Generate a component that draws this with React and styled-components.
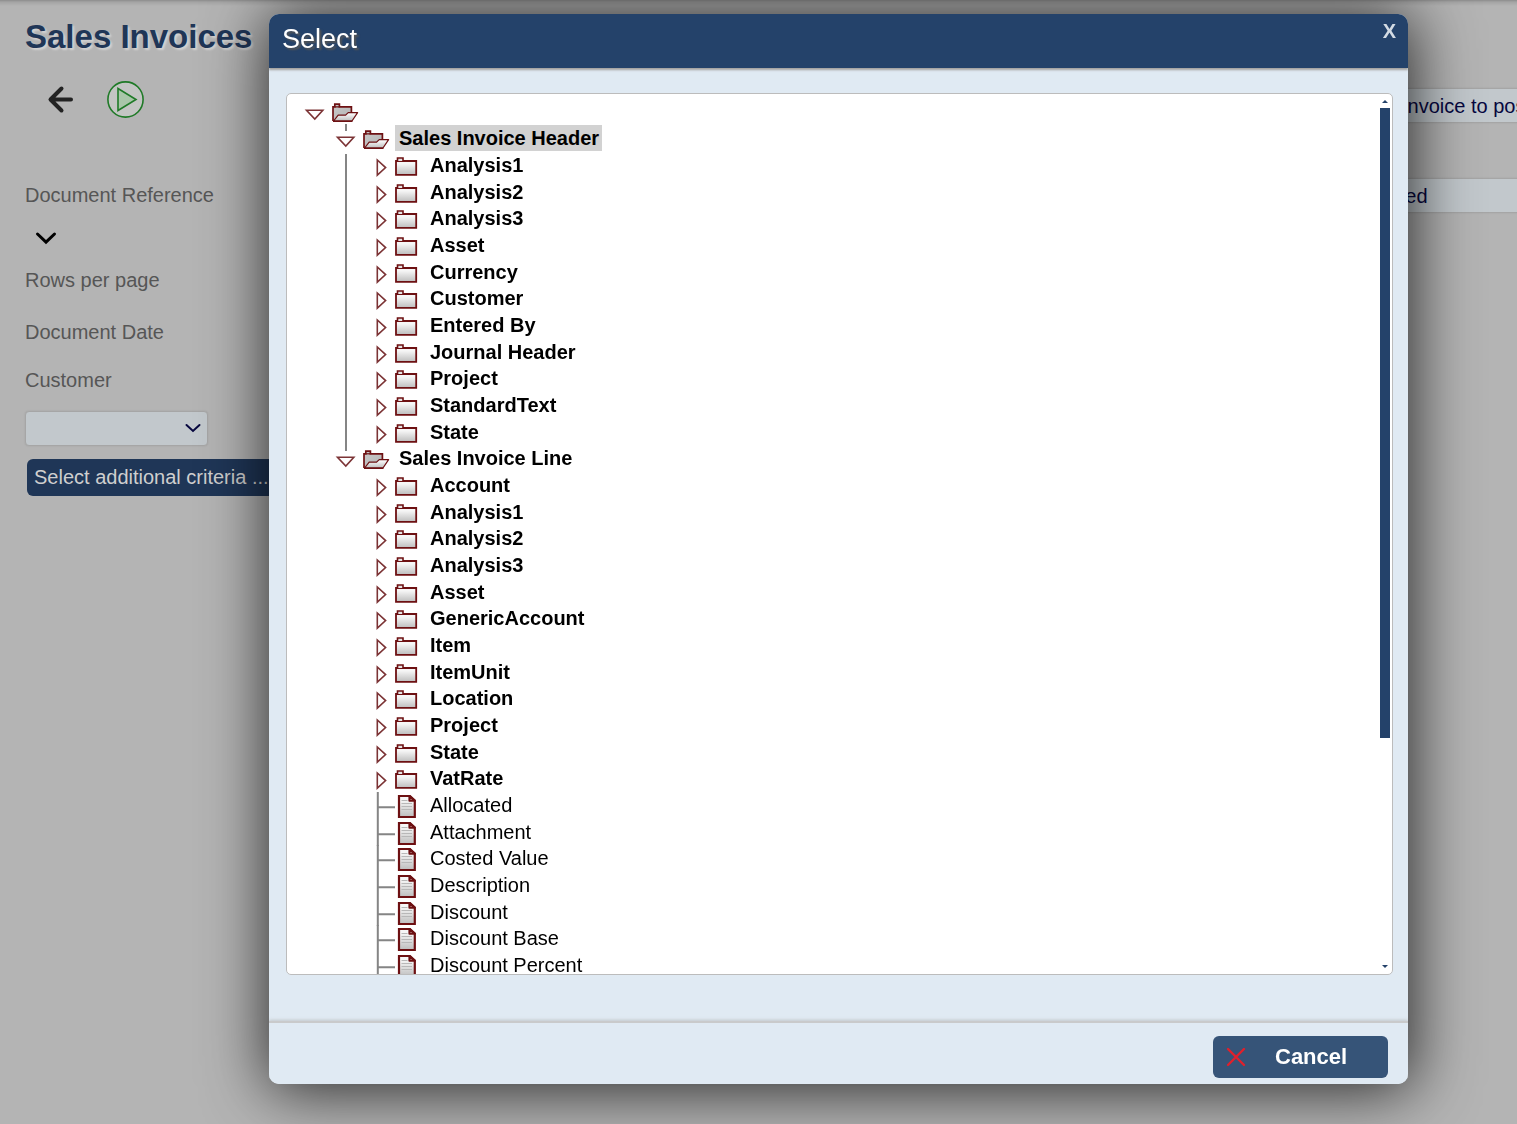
import React from "react";
import styled, { createGlobalStyle, css } from "styled-components";

const GlobalStyle = createGlobalStyle`
  *, *::before, *::after { box-sizing: border-box; }
  html, body { margin: 0; padding: 0; background: #b4b4b4; }
  body, button, input, select {
    font-family: "Liberation Sans", Arial, Helvetica, sans-serif;
    font-size: 20px;
  }
  body { overflow: hidden; }
  button { cursor: pointer; }
`;

const navy = "#24426a";
const maroon = "#6d1012";

const Page = styled.main`
  display: flex;
  justify-content: space-between;
  min-height: 100vh;
  overflow: hidden;
  background: linear-gradient(#8c8c8c, #a4a4a4 2px, #b4b4b4 6px);
`;

const Criteria = styled.form`
  display: flex;
  flex-direction: column;
  align-items: flex-start;
  width: 300px;
  padding: 17px 0 0 25px;
`;

const Title = styled.h1`
  margin: 0 0 24px;
  font-size: 33px;
  line-height: 40px;
  font-weight: bold;
  white-space: nowrap;
  color: #1f3657;
  text-shadow: 2px 2px 2px #d2d2d2;
`;

const Toolbar = styled.div`
  display: flex;
  gap: 28px;
  padding-left: 17px;
  margin-bottom: 65px;
`;

const IconButton = styled.button`
  display: flex;
  padding: 0;
  border: 0;
  background: none;
`;

const FieldLabel = styled.label`
  line-height: 24px;
  color: #565656;
  margin-bottom: ${(p) => p.$gap}px;
`;

const ExpandButton = styled(IconButton)`
  margin: 0 0 18px 9px;
`;

const SelectWrap = styled.div`
  position: relative;
  width: 183px;
  margin-bottom: 13px;
`;

const fieldLook = css`
  height: 35px;
  border: 1px solid #a6a6a6;
  background: #c2c8cc;
  color: #07073f;
  box-shadow: 0 0 2px rgba(0, 0, 0, 0.1);
`;

const SelectBox = styled.select`
  ${fieldLook}
  display: block;
  width: 100%;
  border-radius: 4px;
  appearance: none;
`;

const SelectArrow = styled.svg`
  position: absolute;
  right: 7px;
  top: 11px;
  pointer-events: none;
`;

const CriteriaButton = styled.button`
  height: 37px;
  margin-left: 2px;
  padding: 0 7px;
  border: 0;
  border-radius: 6px;
  background: #1f3657;
  color: #cfcfcf;
  white-space: nowrap;
`;

const Status = styled.div`
  display: flex;
  flex-direction: column;
  gap: 55px;
  width: 187px;
  padding-top: 88px;
`;

const StatusInput = styled.input`
  ${fieldLook}
  flex-shrink: 0;
  width: 260px;
  padding: 1px 11px 0;
  border-radius: 4px;
`;

const Overlay = styled.div`
  position: fixed;
  inset: 0;
  display: flex;
  padding: 14px 109px 40px 269px;
`;

const Dialog = styled.section`
  flex: 1;
  min-width: 0;
  display: flex;
  flex-direction: column;
  border-radius: 10px;
  overflow: hidden;
  background: #e0eaf3;
  box-shadow: 2px 3px 64px 2px rgba(0, 0, 0, 0.8);
`;

const DialogHeader = styled.header`
  display: flex;
  justify-content: space-between;
  align-items: flex-start;
  height: 54px;
  flex-shrink: 0;
  padding: 5px 12px 0 13px;
  background: ${navy};
  box-shadow: 0 2px 2px rgba(120, 110, 100, 0.6);
`;

const DialogTitle = styled.h2`
  margin: 0;
  font-size: 27px;
  line-height: 40px;
  font-weight: normal;
  color: #fff;
  text-shadow: 2px 2px 2px #555;
`;

const CloseButton = styled.button`
  padding: 0;
  border: 0;
  background: none;
  font-size: 20px;
  line-height: 24px;
  font-weight: bold;
  color: #d3dbe4;
`;

const DialogBody = styled.div`
  flex: 1;
  min-height: 0;
  display: flex;
  padding: 25px 15px 48px 17px;
`;

const TreePanel = styled.div`
  flex: 1;
  display: flex;
  min-width: 0;
  overflow: hidden;
  border: 1px solid #bcbcbc;
  border-radius: 5px;
  background: #fff;
`;

const TreeView = styled.div`
  flex: 1;
  overflow: hidden;
  padding: 4px 0 0 17px;
`;

const ScrollTrack = styled.div`
  display: flex;
  flex-direction: column;
  align-items: center;
  justify-content: space-between;
  width: 10px;
  margin-right: 2px;
`;

const ScrollArea = styled.div`
  flex: 1;
  width: 100%;
`;

const ScrollThumb = styled.div`
  height: 74%;
  background: ${navy};
`;

const Branch = styled.ul`
  margin: 0;
  padding: 0 0 0 31px;
  list-style: none;
  ${(p) =>
    p.$line &&
    css`
      background: linear-gradient(#858585, #858585) no-repeat 10px 2px / 2px 100%;
    `}
`;

const Row = styled.div`
  display: flex;
  height: 27px;
`;

const Leaf = styled.li`
  display: flex;
  height: 27px;
  &:nth-child(3n + 2) {
    height: 26px;
  }
`;

const Toggle = styled.svg`
  flex: none;
  width: 28px;
  height: 27px;
  overflow: visible;
`;

const Icon = styled.svg`
  flex: none;
  width: 32px;
  height: 27px;
  overflow: visible;
`;

const Label = styled.span`
  height: 26px;
  padding: 3px 3px 0 4px;
  line-height: 20px;
  white-space: nowrap;
  color: #000;
  font-weight: ${(p) => (p.$bold ? "bold" : "normal")};
  background: ${(p) => (p.$selected ? "#d2d2d2" : "transparent")};
`;

const DialogFooter = styled.footer`
  display: flex;
  justify-content: flex-end;
  flex-shrink: 0;
  padding: 13px 20px 6px;
  background: #e0eaf3;
  box-shadow: 0 -2px 0 #c9cacb, 0 -3px 3px rgba(150, 145, 140, 0.4);
`;

const CancelButton = styled.button`
  display: flex;
  align-items: center;
  gap: 29px;
  width: 175px;
  height: 42px;
  padding: 0 13px;
  border: 0;
  border-radius: 6px;
  background: #365478;
  color: #fff;
  font-size: 22px;
  font-weight: bold;
`;

const HiddenDefs = styled.svg`
  position: absolute;
`;

function Defs() {
  return (
    <HiddenDefs width="0" height="0" aria-hidden="true">
      <defs>
        <linearGradient id="paper" x1="0" y1="0" x2="0" y2="1">
          <stop offset="0.2" stopColor="#f6f6f6" />
          <stop offset="1" stopColor="#bdbdbd" />
        </linearGradient>
        <linearGradient id="back" x1="0" y1="0" x2="1" y2="1">
          <stop offset="0" stopColor="#c8c8c8" />
          <stop offset="1" stopColor="#b4b4b4" />
        </linearGradient>
      </defs>
    </HiddenDefs>
  );
}

function OpenToggle({ line }) {
  return (
    <Toggle viewBox="0 0 28 27" aria-hidden="true">
      {line && <path d="M11 -1V6" stroke="#858585" strokeWidth="2" />}
      <path d="M2.5 12.3H18.8L10.8 21Z" fill="#fff" stroke="#7c3436" strokeWidth="1.6" />
    </Toggle>
  );
}

function ClosedToggle() {
  return (
    <Toggle viewBox="0 0 28 27" aria-hidden="true">
      <path d="M11.3 8V23.2L19.6 15.6Z" fill="#fff" stroke="#7c3436" strokeWidth="1.6" />
    </Toggle>
  );
}

function LeafLine() {
  return (
    <Toggle viewBox="0 0 28 27" aria-hidden="true">
      <path d="M11.8 0V27M12 15.2H29" fill="none" stroke="#858585" strokeWidth="2" />
    </Toggle>
  );
}

function OpenFolder() {
  return (
    <Icon viewBox="0 0 32 27" aria-hidden="true">
      <path d="M1 23V8.8H2.8V6.2H7.4V8.8H19.4V14.5" fill="url(#back)" stroke={maroon} strokeWidth="1.7" />
      <path d="M2.8 8.8H7.4" stroke={maroon} strokeWidth="1.2" />
      <path
        d="M1.6 23L6.2 17.2H13.6L16.2 14.6H25.6L20 23Z"
        fill="url(#paper)"
        stroke={maroon}
        strokeWidth="1.2"
        strokeLinejoin="round"
      />
      <path d="M1 23.2H20.4" stroke={maroon} strokeWidth="1.6" />
    </Icon>
  );
}

function ClosedFolder() {
  return (
    <Icon viewBox="0 0 32 27" aria-hidden="true">
      <path d="M2 9H22.2V22.8H2Z" fill="url(#paper)" stroke={maroon} strokeWidth="1.8" />
      <path d="M3.5 9V6H9V9" fill="#e4e4e4" stroke={maroon} strokeWidth="1.6" />
    </Icon>
  );
}

function FileIcon() {
  return (
    <Icon viewBox="0 0 32 27" aria-hidden="true">
      <path d="M5 4H16L20.8 8.4V25H5Z" fill="url(#paper)" stroke={maroon} strokeWidth="2.2" />
      <path d="M7.5 8.5H13.5M7.5 11.5H18M7.5 14.5H18M7.5 17.5H18" stroke="#b8b8b8" />
      <path
        d="M15.4 4V8.8H20.8Z"
        fill="#c9a3a3"
        stroke={maroon}
        strokeWidth="2"
        strokeLinejoin="round"
      />
    </Icon>
  );
}

const headerFolders = [
  "Analysis1", "Analysis2", "Analysis3", "Asset", "Currency", "Customer",
  "Entered By", "Journal Header", "Project", "StandardText", "State",
];

const lineFolders = [
  "Account", "Analysis1", "Analysis2", "Analysis3", "Asset", "GenericAccount",
  "Item", "ItemUnit", "Location", "Project", "State", "VatRate",
];

const lineFields = [
  "Allocated", "Attachment", "Costed Value", "Description", "Discount",
  "Discount Base", "Discount Percent",
];

function Group({ name, selected, line, folders, fields = [] }) {
  return (
    <li>
      <Row>
        <OpenToggle line />
        <OpenFolder />
        <Label $bold $selected={selected}>{name}</Label>
      </Row>
      <Branch $line={line}>
        {folders.map((f) => (
          <Leaf key={f}>
            <ClosedToggle />
            <ClosedFolder />
            <Label $bold>{f}</Label>
          </Leaf>
        ))}
        {fields.map((f) => (
          <Leaf key={f}>
            <LeafLine />
            <FileIcon />
            <Label>{f}</Label>
          </Leaf>
        ))}
      </Branch>
    </li>
  );
}

export default function App() {
  return (
    <>
      <GlobalStyle />
      <Defs />
      <Page>
        <Criteria onSubmit={(e) => e.preventDefault()}>
          <Title>Sales Invoices</Title>
          <Toolbar>
            <IconButton type="button" aria-label="Back">
              <svg width="37" height="37" viewBox="0 0 37 37" fill="none" stroke="#222" strokeWidth="4">
                <path d="M19.5 7.5L8.5 18.5L19.5 29.5M9 18.5H29" strokeLinejoin="round" strokeLinecap="round" />
              </svg>
            </IconButton>
            <IconButton type="button" aria-label="Run">
              <svg width="37" height="37" viewBox="0 0 37 37" stroke="#1f7a27" strokeWidth="1.6">
                <circle cx="18.5" cy="18.5" r="17.6" fill="#c3c5c3" />
                <path d="M11 7.5V29.5L29 18.5Z" fill="#a9c6a9" />
              </svg>
            </IconButton>
          </Toolbar>
          <FieldLabel as="span" $gap={19}>Document Reference</FieldLabel>
          <ExpandButton type="button" aria-label="Expand">
            <svg width="24" height="24" viewBox="0 0 24 24" fill="none" stroke="#000" strokeWidth="3">
              <path d="M3.5 8L12 16.2L20.5 8" strokeLinecap="round" />
            </svg>
          </ExpandButton>
          <FieldLabel as="span" $gap={28}>Rows per page</FieldLabel>
          <FieldLabel as="span" $gap={24}>Document Date</FieldLabel>
          <FieldLabel htmlFor="customer" $gap={19}>Customer</FieldLabel>
          <SelectWrap>
            <SelectBox id="customer" defaultValue="">
              <option value="" />
            </SelectBox>
            <SelectArrow width="16" height="13" viewBox="0 0 16 13" fill="none" stroke="#07073f" strokeWidth="2">
              <path d="M1.5 3L8 9L14.5 3" strokeLinecap="round" />
            </SelectArrow>
          </SelectWrap>
          <CriteriaButton type="button">Select additional criteria ...</CriteriaButton>
        </Criteria>
        <Status>
          <StatusInput aria-label="Action" defaultValue="Select invoice to post" />
          <StatusInput aria-label="Status" defaultValue="Unposted" />
        </Status>
      </Page>

      <Overlay>
        <Dialog role="dialog" aria-labelledby="dialog-title">
          <DialogHeader>
            <DialogTitle id="dialog-title">Select</DialogTitle>
            <CloseButton type="button" aria-label="Close">X</CloseButton>
          </DialogHeader>
          <DialogBody>
            <TreePanel>
              <TreeView>
                <Row>
                  <OpenToggle />
                  <OpenFolder />
                </Row>
                <Branch>
                  <Group name="Sales Invoice Header" selected line folders={headerFolders} />
                  <Group name="Sales Invoice Line" folders={lineFolders} fields={lineFields} />
                </Branch>
              </TreeView>
              <ScrollTrack>
                <svg width="10" height="14" viewBox="0 0 10 14" aria-hidden="true">
                  <path d="M2 9H8L5 6Z" fill={navy} />
                </svg>
                <ScrollArea>
                  <ScrollThumb />
                </ScrollArea>
                <svg width="10" height="14" viewBox="0 0 10 14" aria-hidden="true">
                  <path d="M2 5H8L5 8Z" fill={navy} />
                </svg>
              </ScrollTrack>
            </TreePanel>
          </DialogBody>
          <DialogFooter>
            <CancelButton type="button">
              <svg width="20" height="20" viewBox="0 0 20 20" stroke="#e0202c" strokeWidth="2.4" strokeLinecap="round" aria-hidden="true">
                <path d="M2 2L18 18M18 2L2 18" />
              </svg>
              Cancel
            </CancelButton>
          </DialogFooter>
        </Dialog>
      </Overlay>
    </>
  );
}
